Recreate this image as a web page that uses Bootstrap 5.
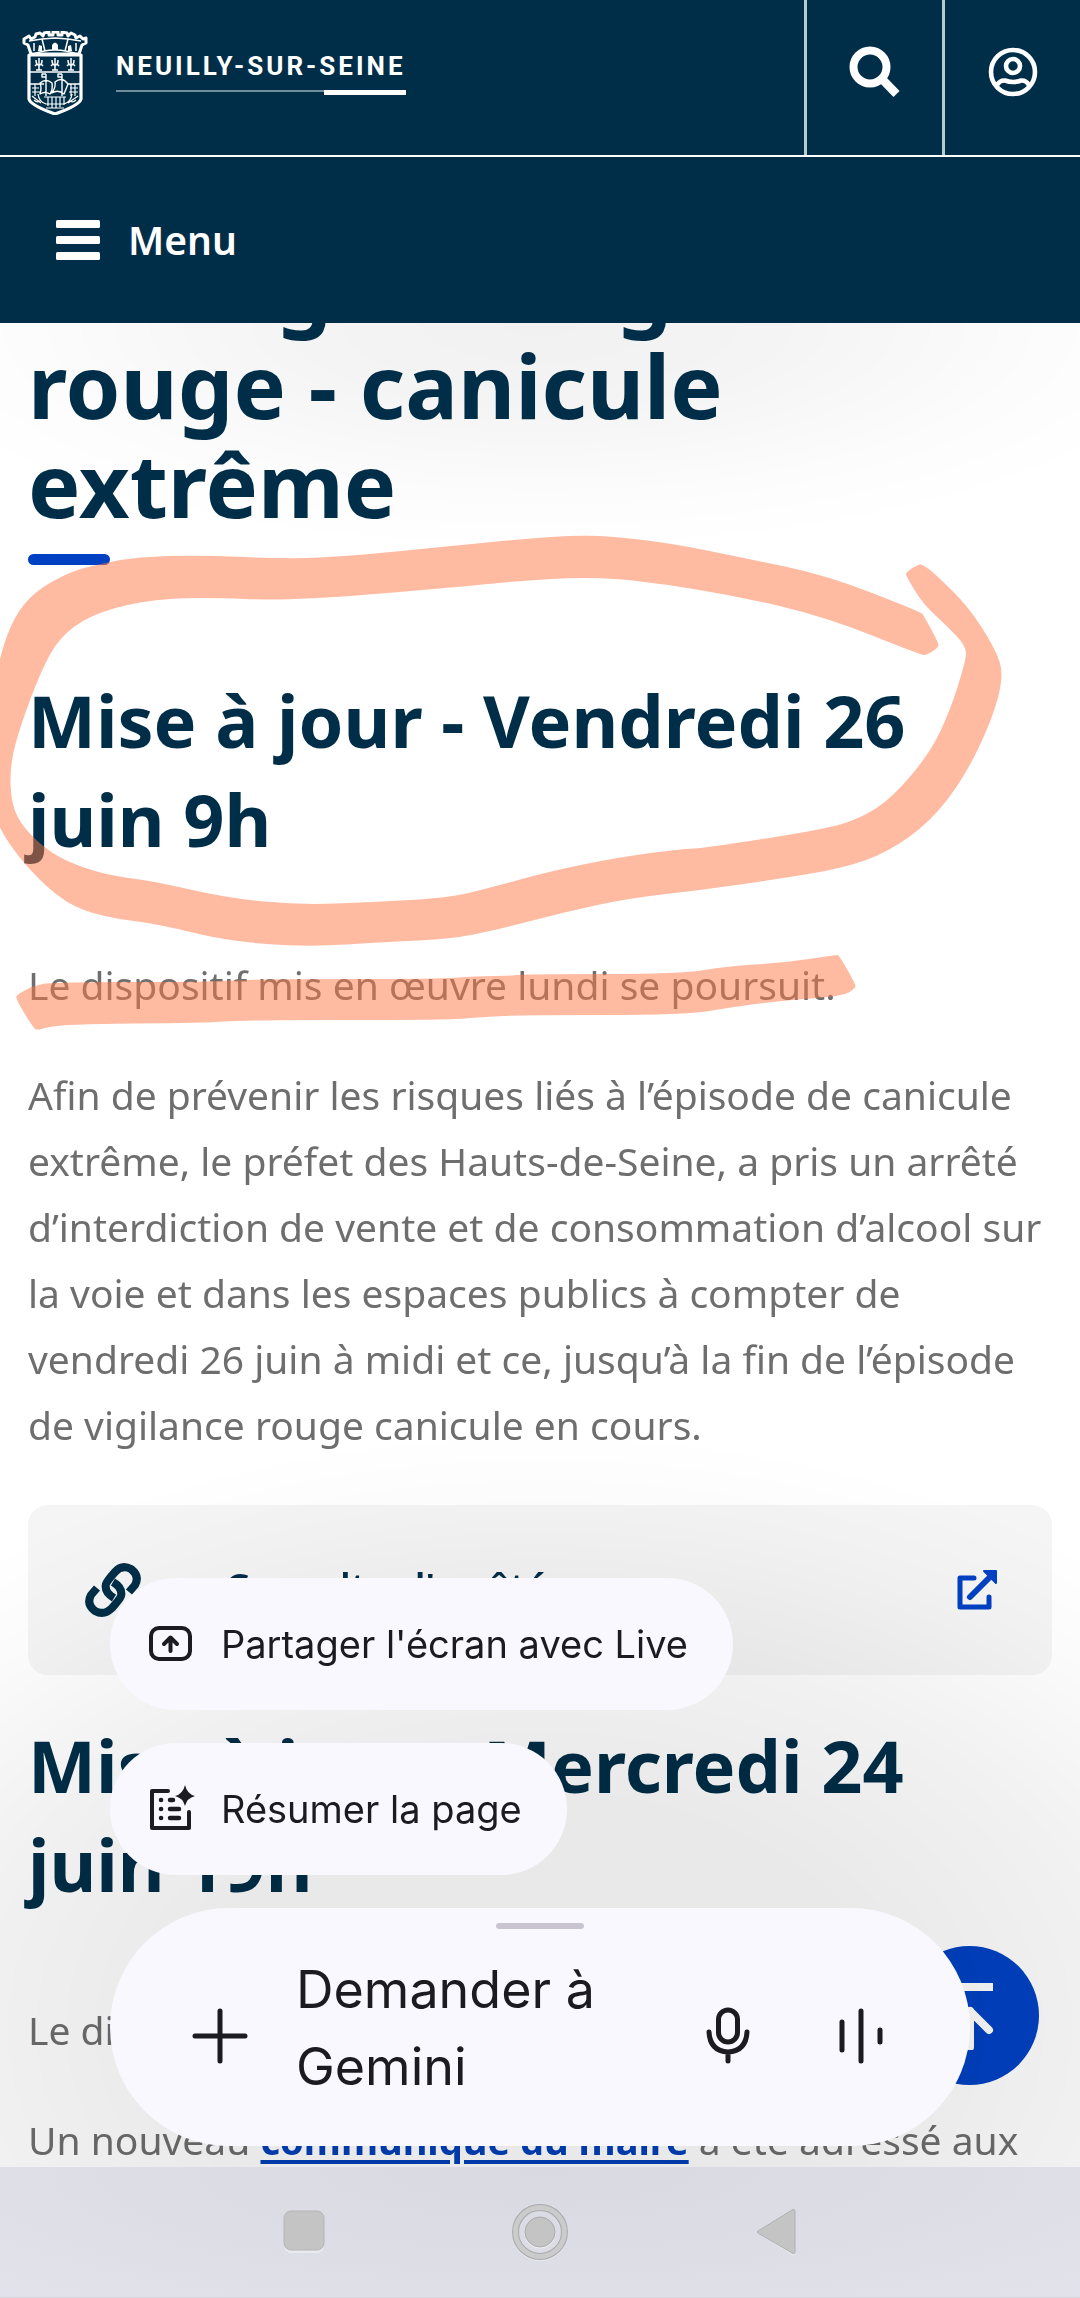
<!DOCTYPE html>
<html lang="fr">
<head>
<meta charset="utf-8">
<meta name="viewport" content="width=device-width, initial-scale=1">
<title>Neuilly-sur-Seine - Vigilance canicule</title>
<link href="https://cdn.jsdelivr.net/npm/bootstrap@5.3.0/dist/css/bootstrap.min.css" rel="stylesheet">
<style>
:root{--navy:#002e48;--blue:#003fb8;--grey:#6e6e6e;--ink:#1b1b20;--sheet:#f9f8ff}
body{font-family:"Noto Sans","Open Sans",sans-serif;font-size:39px;line-height:66px;color:var(--grey);background:#fff}
svg{display:block;flex:none}
.site-head{background:var(--navy);color:#fff}
.head-top{height:157px;border-bottom:2px solid #fff}
.brand-link{color:#fff;text-decoration:none;padding-left:22px;height:145px}
.brand-name{font:700 26px/32px Roboto,sans-serif;letter-spacing:3px}
.brand-rule{height:5px;border-top:2px solid #6f8d9c}
.brand-rule span{height:5px;width:82px;margin-top:-2px;background:#fff}
.head-btn{width:138px;border:0;border-left:3px solid #b4ccd2;background:none;color:#fff;padding:0 0 12px}
.menu-row{height:166px;padding-left:56px}
.menu-btn{font-size:39px;line-height:52px;font-weight:600;color:#fff;background:none;border:0;padding:0}
.page-main{padding:237px 28px 126px}
.page-title{font-size:88px;line-height:99px;font-weight:700;color:var(--navy);margin:0 0 20px}
.title-bar{width:82px;height:11px;border-radius:6px;background:#0041c4;margin-bottom:106px}
.sub-title{font-size:72px;line-height:99px;font-weight:700;color:var(--navy);margin:0 0 83px}
.page-main p{margin:0 0 44px}
.page-main p a{color:var(--blue);font-size:38px;font-weight:700;text-decoration-thickness:4px;text-underline-offset:5px}
.doc-link{height:170px;border-radius:20px;background:#f5f5f5;color:var(--navy);font-weight:600;font-size:38px;text-decoration:none;padding:0 55px 0 57px;margin:47px 0 41px}
.doc-label{padding-left:84px;padding-bottom:8px}
.ink-layer{position:absolute;left:0;top:0;z-index:5;pointer-events:none;width:1080px}
.ink-layer path{fill:#ff7745;fill-opacity:.5}
.top-shade{position:fixed;inset:323px 0 auto 0;height:240px;z-index:-1;background:radial-gradient(ellipse 680px 230px at 50% 0,rgba(0,0,0,.056),rgba(0,0,0,.042) 35%,rgba(0,0,0,.012) 75%,transparent)}
.low-shade{position:fixed;inset:auto 0 131px 0;height:729px;z-index:1025;pointer-events:none;background:radial-gradient(ellipse 900px 600px at 50% 590px,rgba(0,0,0,.09),rgba(0,0,0,.086) 38%,rgba(0,0,0,.055) 64%,rgba(0,0,0,.015) 86%,transparent)}
.to-top{right:41px;bottom:213px;width:139px;height:139px;border:0;border-radius:50%;background:#0042c4;color:#fff;z-index:1020;padding:0}
.sys-nav{height:131px;background:radial-gradient(ellipse 800px 190px at 50% 0,#d9d9e1,#dddde5 50%,#e3e3ed);border-bottom:1px solid #d5d5dd}
.sys-nav button{width:236px;border:0;background:none;padding:0}
.ask-sheet{left:110px;right:110px;bottom:152px;gap:33px;z-index:1040;font-family:Inter,sans-serif;color:var(--ink)}
.chip-btn{height:132px;border:0;border-radius:66px;background:var(--sheet);color:var(--ink);font-size:38px;line-height:52px;padding:0 45px 0 37px;gap:26px}
.ask-box{background:var(--sheet);border-radius:119px;height:238px;padding-top:15px}
.ask-grip{width:88px;height:6px;border-radius:3px;background:#c8c5d0}
.ask-row{padding:0 86px 3px 81px}
.ask-row button{border:0;background:none;padding:0;color:var(--ink)}
.ask-input{border:0;background:none;resize:none;padding:0;margin:0 0 16px 47px;height:154px;min-width:0;font-size:52px;line-height:77px;font-weight:400;color:var(--ink);overflow:hidden}
.ask-input::placeholder{color:var(--ink);opacity:1}
.ask-tools{gap:86px;padding-left:60px}
</style>
<script src="https://cdn.jsdelivr.net/npm/bootstrap@5.3.0/dist/js/bootstrap.bundle.min.js"></script>
</head>
<body>
<header class="site-head fixed-top">
  <div class="head-top d-flex">
    <a class="brand-link d-flex align-items-center me-auto" href="#" aria-label="Neuilly-sur-Seine, accueil">
      <svg width="66" height="84" viewBox="0 0 66 84" fill="none" stroke="#fff" stroke-linejoin="round" aria-hidden="true">
        <path stroke-width="3" d="M2 8 7 5 9 8 13 6 14 3 18 2 21 5 22 2 27 1V4H31V1H36V4H40V1L45 2 46 5 49 2 53 4 54 7 58 5 61 8 64 7V12L60 14 57 23H9L6 14 2 12Z"/>
        <path stroke-width="1.500" d="M7 10 20 8 33 7 46 8 59 10M20 8 23 20M46 8 43 20M12 12v8M54 12v8"/>
        <path fill="#fff" stroke="none" d="M30 19v-5q3-5 6 0v5zM16 20l1-6 3 1v5zM50 20l-1-6-3 1v5z"/>
        <path stroke-width="1.500" d="M9 24Q33 14 57 24"/>
        <path stroke-width="3.200" d="M7 24H59V68Q58 74 33 83 8 74 7 68Z"/>
        <path stroke-width="1.300" d="M8 41H58M8 53H22M45 53H58"/>
        <g stroke-width="1.500"><path d="M17 27v12M14 29q0 5 3 5t3-5M13 35q2-3 4 0 2-3 4 0M14 39h6"/><path d="M33 27v12M30 29q0 5 3 5t3-5M29 35q2-3 4 0 2-3 4 0M30 39h6"/><path d="M49 27v12M46 29q0 5 3 5t3-5M45 35q2-3 4 0 2-3 4 0M46 39h6"/></g>
        <path stroke-width="1.400" d="M24 43v22M24 43h-4v3h4M40 43v22M40 43h-4v3h4M18 52q6-5 12 0 1 7-2 11-5-3-10 0 2-6 0-11ZM33 51q7-6 13 2l-4 10q-6-5-12-1 4-6 3-11Z"/>
        <path stroke-width="1.200" d="M10 57h7M10 61h9M48 57h8M47 61h9M49 53v12M53 53v12M13 53v12M10 65l9 7M56 65l-10 7M16 63q1 8 8 10h18q7-2 8-10M26 66v9M30 66v11M34 66v11M38 66v10M42 66v8M22 66h22M12 69q3 3 6 1M54 69q-3 3-6 1M24 77h18"/>
      </svg>
      <span class="d-flex flex-column ms-4 ps-1">
        <span class="brand-name">NEUILLY-SUR-SEINE</span>
        <span class="brand-rule d-flex justify-content-end mt-2"><span></span></span>
      </span>
    </a>
    <button class="head-btn d-flex align-items-center justify-content-center" aria-label="Rechercher">
      <svg width="52" height="52" viewBox="0 0 52 52" fill="none" stroke="#fff"><circle cx="21" cy="21" r="16.500" stroke-width="8"/><path stroke-width="8.500" stroke-linejoin="round" d="M32 32 47.500 48"/></svg>
    </button>
    <button class="head-btn d-flex align-items-center justify-content-center" aria-label="Mon compte">
      <svg width="50" height="50" viewBox="0 0 50 50" fill="none" stroke="#fff" stroke-width="4.600"><circle cx="25" cy="25" r="22"/><circle cx="25" cy="19" r="7"/><path d="M9 38Q12 33 17 33.500 21 35 25 35 29 35 33 33.500 38 33 41 38"/></svg>
    </button>
  </div>
  <div class="menu-row d-flex align-items-center">
    <button class="menu-btn d-flex align-items-center">
      <svg width="44" height="40" viewBox="0 0 44 40" fill="#fff" aria-hidden="true"><rect width="44" height="8" rx="1.500"/><rect y="16" width="44" height="8" rx="1.500"/><rect y="32" width="44" height="8" rx="1.500"/></svg>
      <span class="ps-4 ms-1">Menu</span>
    </button>
  </div>
</header>

<div class="top-shade"></div>

<main class="page-main">
  <h1 class="page-title">Passage en vigilance rouge - canicule extrême</h1>
  <div class="title-bar"></div>
  <h2 class="sub-title">Mise à jour - Vendredi 26 juin 9h</h2>
  <p>Le dispositif mis en œuvre lundi se poursuit.</p>
  <p>Afin de prévenir les risques liés à l’épisode de canicule extrême, le préfet des Hauts-de-Seine, a pris un arrêté d’interdiction de vente et de consommation d’alcool sur la voie et dans les espaces publics à compter de vendredi 26 juin à midi et ce, jusqu’à la fin de l’épisode de vigilance rouge canicule en cours.</p>
  <a class="doc-link d-flex align-items-center" href="#">
    <svg width="56" height="56" viewBox="0 0 56 56" fill="none" stroke="#002e48" stroke-width="8" aria-hidden="true"><path d="M29 36Q19 30 21 22 22 19 30 10 37 2 46 7 55 14 50 23L44 30"/><path d="M28 20Q38 26 36 34 35 37 27 46 19 54 10 49 1 42 6 33L12 26"/></svg>
    <span class="doc-label me-auto">Consulter l'arrêté</span>
    <svg width="40" height="40" viewBox="0 0 40 40" fill="none" stroke="#0041c4" stroke-width="5" stroke-linejoin="round" stroke-linecap="round" aria-hidden="true"><path d="M17 8H3V37H32V27"/><path stroke-width="6" d="M13 27 33 7"/><path fill="#0041c4" stroke-width="2" d="M27 1H39V13Z"/></svg>
  </a>
  <h2 class="sub-title">Mise à jour - Mercredi 24 juin 19h</h2>
  <p>Le dispositif mis en œuvre lundi se poursuit.</p>
  <p class="mb-0">Un nouveau <a href="#">communiqué du maire</a> a été adressé aux</p>
</main>

<svg class="ink-layer" width="1080" height="1060" viewBox="0 0 1080 1060" aria-hidden="true">
  <path id="ring"/><path id="underline"/>
</svg>

<button class="to-top position-fixed d-flex align-items-center justify-content-center" aria-label="Haut de page">
  <svg width="48" height="68" viewBox="0 0 48 68" fill="none" stroke="#fff" stroke-width="8"><path d="M1 5H47"/><path stroke-linecap="round" stroke-linejoin="round" d="M5 48 24 29 43 48"/><path stroke-linecap="round" d="M24 29V65"/></svg>
</button>

<nav class="sys-nav fixed-bottom d-flex justify-content-center" aria-label="Navigation système">
  <button class="d-flex align-items-center justify-content-center" aria-label="Applications récentes"><svg width="44" height="46" viewBox="0 0 44 46"><rect x="2" y="3" width="40" height="41" rx="7" fill="#e9e9ee"/><rect x="2" y="2" width="40" height="39" rx="7" fill="#c4c4c4" stroke="#b4b4b9"/></svg></button>
  <button class="d-flex align-items-center justify-content-center" aria-label="Accueil"><svg width="60" height="60" viewBox="0 0 60 60" fill="none"><circle cx="30" cy="31" r="25" stroke="#e9e9ee" stroke-width="6"/><circle cx="30" cy="30" r="24.500" stroke="#a8a8ae" stroke-width="7"/><circle cx="30" cy="30" r="24.500" stroke="#cbcbcb" stroke-width="5"/><circle cx="30" cy="31" r="15.500" fill="#eeeef2"/><circle cx="30" cy="30" r="15" fill="#c4c4c4" stroke="#aaaab0"/></svg></button>
  <button class="d-flex align-items-center justify-content-center" aria-label="Retour"><svg width="42" height="52" viewBox="0 0 42 52"><path d="M3 27 37 6Q40 4 40 8V47Q40 51 37 49Z" fill="#e9e9ee"/><path d="M3 25 37 4Q40 2 40 6V45Q40 49 37 47L3 27Q1 26 3 25Z" fill="#c4c4c4" stroke="#b0b0b6"/></svg></button>
</nav>

<div class="low-shade"></div>

<section class="ask-sheet position-fixed d-flex flex-column" aria-label="Gemini">
  <button class="chip-btn d-flex align-items-center align-self-start">
    <svg width="48" height="48" viewBox="0 0 48 48" fill="none" stroke="#1b1b20" stroke-width="4" stroke-linecap="round" stroke-linejoin="round" aria-hidden="true"><rect x="4" y="8" width="39" height="31" rx="8"/><path d="M23.500 31V18M17 24 23.500 17.500 30 24"/></svg>
    <span>Partager l'écran avec Live</span>
  </button>
  <button class="chip-btn d-flex align-items-center align-self-start">
    <svg width="48" height="48" viewBox="0 0 48 48" fill="none" stroke="#1b1b20" stroke-width="4" stroke-linecap="round" stroke-linejoin="round" aria-hidden="true"><path d="M21 6H5V43H42V27"/><path d="M14 15h.1M14 24h.1M14 33h.1M23 15h3M23 24h9M23 33h9" stroke-width="4.500"/><path fill="#1b1b20" stroke="none" d="M38 0Q40 9 48 11 40 13 38 21 36 13 28 11 36 9 38 0Z"/></svg>
    <span>Résumer la page</span>
  </button>
  <div class="ask-box d-flex flex-column align-items-center">
    <div class="ask-grip"></div>
    <div class="ask-row d-flex align-items-center w-100 flex-grow-1">
      <button aria-label="Ajouter"><svg width="58" height="58" viewBox="0 0 58 58" stroke="#1b1b20" stroke-width="5" stroke-linecap="round"><path d="M29 4V54M4 29H54"/></svg></button>
      <textarea class="ask-input flex-grow-1" rows="2" aria-label="Demander à Gemini" placeholder="Demander à Gemini"></textarea>
      <div class="ask-tools d-flex align-items-center">
        <button aria-label="Micro"><svg width="46" height="58" viewBox="0 0 46 58" fill="none" stroke="#1b1b20" stroke-width="5" stroke-linecap="round"><rect x="12.500" y="3" width="19" height="32" rx="9.500"/><path d="M3 25Q4 44 22 45 40 44 41 25M22 45V54"/></svg></button>
        <button aria-label="Gemini Live"><svg width="46" height="58" viewBox="0 0 46 58" stroke="#1b1b20" stroke-width="5" stroke-linecap="round"><path d="M4 15V43M23 4V54M42 23V35"/></svg></button>
      </div>
    </div>
  </div>
</section>

<script>
// Turns a list of points into a closed outline with softened corners.
function softPath(text){
  const p=text.trim().split(/\s+/).map(s=>s.split(',').map(Number)),n=p.length;
  const mid=(a,b)=>((a[0]+b[0])/2)+' '+((a[1]+b[1])/2);
  let d='M'+mid(p[n-1],p[0]);
  for(let i=0;i<n;i++)d+='Q'+p[i][0]+' '+p[i][1]+' '+mid(p[i],p[(i+1)%n]);
  return d+'Z';
}
document.getElementById('ring').setAttribute('d',softPath(`
921,612 924,616 938,642 939,647 927,655 921,655 826,617 737,596 644,581 585,577 517,581 448,588 289,601 200,597 141,601 90,615 59,638 41,671
21,724 10,764 11,804 24,829 52,854 83,868 114,876 158,882 227,898 300,905 372,902 448,898 489,888 551,871 620,857 682,849 706,848 826,829
861,818 892,798 930,753 950,711 966,660 966,646 947,626 923,604 906,576 906,572 919,564 923,565 933,572 968,606 995,648 1004,675 992,720
964,778 930,822 888,852 844,868 778,879 702,890 630,898 565,912 496,930 451,939 386,942 306,947 227,941 158,924 103,917 65,903 28,869 0,831
-10,800 -12,720 0,655 14,617 34,592 69,572 103,563 138,557 200,555 289,559 351,556 441,547 523,539 579,535 620,537 675,544 744,558 826,575`));
document.getElementById('underline').setAttribute('d',softPath(`
15,998 18,994 33,986 52,982 207,982 255,979 441,979 475,976 510,976 523,974 682,974 727,966 782,963 836,955 839,955 856,985 855,988 844,996
778,1001 733,1007 685,1015 523,1015 482,1017 448,1020 241,1020 207,1023 62,1024 38,1030 34,1029`));
</script>
</body>
</html>
